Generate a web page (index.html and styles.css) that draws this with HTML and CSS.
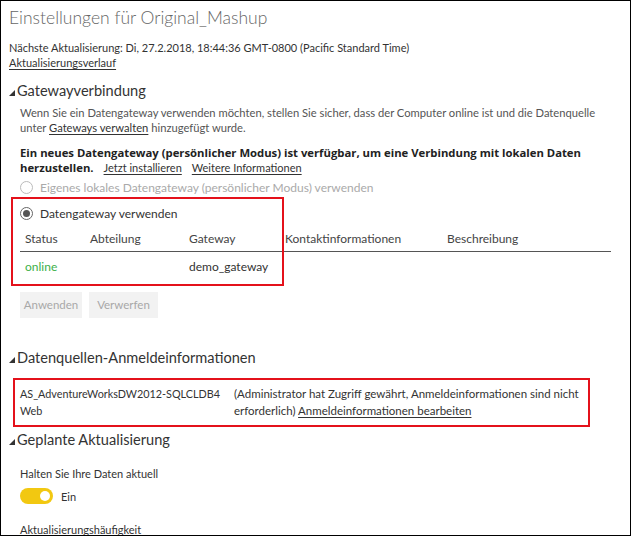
FILE: index.html
```html
<!DOCTYPE html>
<html lang="de">
<head>
<meta charset="utf-8">
<link rel="stylesheet" href="styles.css">
</head>
<body>
<div class="frame">
  <h1 class="title">Einstellungen für Original_Mashup</h1>
  <p class="next">Nächste Aktualisierung: Di, 27.2.2018, 18:44:36 GMT-0800 (Pacific Standard Time)</p>
  <a class="link next-link">Aktualisierungsverlauf</a>

  <section class="sec sec-gateway">
    <h2 class="sec-h"><svg class="tri" viewBox="0 0 6 6" width="6" height="6"><polygon points="6,0 6,6 0,6"/></svg>Gatewayverbindung</h2>
    <div class="sec-body">
      <p class="info">Wenn Sie ein Datengateway verwenden möchten, stellen Sie sicher, dass der Computer online ist und die Datenquelle unter <a class="link">Gateways verwalten</a> hinzugefügt wurde.</p>
      <p class="notice"><b>Ein neues Datengateway (persönlicher Modus) ist verfügbar, um eine Verbindung mit lokalen Daten herzustellen.</b><a class="link gap-link">Jetzt installieren</a><a class="link gap-link">Weitere Informationen</a></p>
      <div class="radio radio-disabled"><span class="rc"></span>Eigenes lokales Datengateway (persönlicher Modus) verwenden</div>
      <div class="gw-block">
        <div class="radio radio-checked"><span class="rc"><span class="dot"></span></span>Datengateway verwenden</div>
        <div class="gw-table">
          <div class="th">Status</div><div class="th">Abteilung</div><div class="th">Gateway</div><div class="th">Kontaktinformationen</div><div class="th">Beschreibung</div>
          <div class="td online">online</div><div class="td"></div><div class="td">demo_gateway</div><div class="td"></div><div class="td"></div>
        </div>
        <div class="highlight"></div>
      </div>
      <div class="buttons">
        <span class="btn btn-apply">Anwenden</span>
        <span class="btn btn-discard">Verwerfen</span>
      </div>
    </div>
  </section>

  <section class="sec sec-creds">
    <h2 class="sec-h"><svg class="tri" viewBox="0 0 6 6" width="6" height="6"><polygon points="6,0 6,6 0,6"/></svg>Datenquellen-Anmeldeinformationen</h2>
    <div class="cred-box">
      <div class="cred-name">AS_AdventureWorksDW2012-SQLCLDB4<br>Web</div>
      <div class="cred-desc">(Administrator hat Zugriff gewährt, Anmeldeinformationen sind nicht erforderlich) <a class="link">Anmeldeinformationen bearbeiten</a></div>
    </div>
  </section>

  <section class="sec sec-sched">
    <h2 class="sec-h"><svg class="tri" viewBox="0 0 6 6" width="6" height="6"><polygon points="6,0 6,6 0,6"/></svg>Geplante Aktualisierung</h2>
    <div class="sec-body">
      <p class="label keep">Halten Sie Ihre Daten aktuell</p>
      <div class="toggle-row"><span class="toggle"><span class="knob"></span></span><span class="toggle-label">Ein</span></div>
      <p class="label freq">Aktualisierungshäufigkeit</p>
    </div>
  </section>
</div>
</body>
</html>
```

FILE: styles.css
```css
* { box-sizing: border-box; }
html, body { margin: 0; padding: 0; background: #fff; }
body {
  font-family: Lato, "Open Sans", sans-serif;
  color: #333;
  font-size: 11px;
}
.frame {
  width: 631px;
  height: 536px;
  border: 1px solid #000;
  padding: 4px 0 0 8px;
  overflow: hidden;
}
p { margin: 0; }
.title {
  margin: 0;
  font-size: 17.5px;
  font-weight: 300;
  line-height: 26px;
  color: #666;
}
.next {
  margin-top: 9px;
  line-height: 15px;
  color: #333;
}
.link {
  color: #333;
  text-decoration: underline;
  text-underline-offset: 2px;
}
.next-link { display: block; line-height: 15px; }

.sec-h {
  margin: 0;
  font-size: 14.6px;
  font-weight: 400;
  line-height: 22px;
  color: #333;
  display: flex;
  align-items: center;
}
.tri { fill: #333; margin: 3px 2px 0 0; }
.sec-gateway { margin-top: 10px; }
.sec-body { padding-left: 11px; }
.info {
  margin-top: 3px;
  max-width: 588px;
  line-height: 15px;
  font-size: 11.2px;
  color: #555;
}
.notice {
  margin-top: 11px;
  line-height: 14.5px;
  color: #222;
}
.notice b { font-family: "Open Sans", Lato, sans-serif; font-size: 11.3px; font-weight: 700; }
.gap-link { margin-left: 10px; font-weight: 400; }

.radio {
  display: flex;
  align-items: center;
  height: 20px;
  font-size: 12px;
}
.rc {
  width: 13px;
  height: 13px;
  border-radius: 50%;
  border: 1px solid #666;
  margin-right: 7px;
  display: flex;
  align-items: center;
  justify-content: center;
}
.radio-disabled { margin-top: 2px; color: #aaa; }
.radio-disabled .rc { border-color: #bbb; }
.radio-checked { color: #333; }
.dot { width: 7px; height: 7px; border-radius: 50%; background: #555; }

.gw-block { position: relative; margin-top: 2px; padding-top: 3px; }
.highlight {
  position: absolute;
  left: -9px;
  top: -2px;
  width: 273px;
  height: 89px;
  border: 2px solid #e4111b;
  pointer-events: none;
}
.gw-block .radio { height: 22px; }
.gw-table {
  display: grid;
  grid-template-columns: 65px 99px 96px 162px 1fr;
  width: 591px;
  font-size: 12px;
}
.th {
  padding: 2px 0 0 5px;
  height: 28px;
  line-height: 26px;
  border-bottom: 1px solid #555;
  color: #444;
}
.td {
  padding: 1px 0 0 5px;
  height: 28px;
  line-height: 27px;
  color: #333;
}
.online { color: #3db049; }

.buttons { display: flex; gap: 7px; margin-top: 12px; }
.btn {
  background: #f2f2f2;
  color: #a8a8a8;
  height: 26px;
  line-height: 26px;
  text-align: center;
  font-size: 11.5px;
}
.btn-apply { width: 62px; }
.btn-discard { width: 69px; }

.sec-creds { margin-top: 29px; }
.cred-box {
  margin: 9px 0 0 4px;
  width: 577px;
  border: 2px solid #e4111b;
  padding: 5px 0 6px 5px;
  display: grid;
  grid-template-columns: 214px minmax(0, 1fr);
  line-height: 17px;
  color: #333;
}
.cred-name { font-size: 10.8px; white-space: nowrap; }
.cred-desc { font-size: 11.5px; }

.sec-sched { margin-top: 2px; }
.label { line-height: 15px; color: #333; }
.keep { margin-top: 15px; }
.toggle-row { display: flex; align-items: center; margin-top: 7px; height: 16px; }
.toggle {
  width: 33px;
  height: 16px;
  border-radius: 8px;
  background: #f2c811;
  display: flex;
  align-items: center;
  justify-content: flex-end;
  padding-right: 3px;
}
.knob { width: 10px; height: 10px; border-radius: 50%; background: #fff; }
.toggle-label { margin-left: 8px; }
.freq { margin-top: 18px; }
```
